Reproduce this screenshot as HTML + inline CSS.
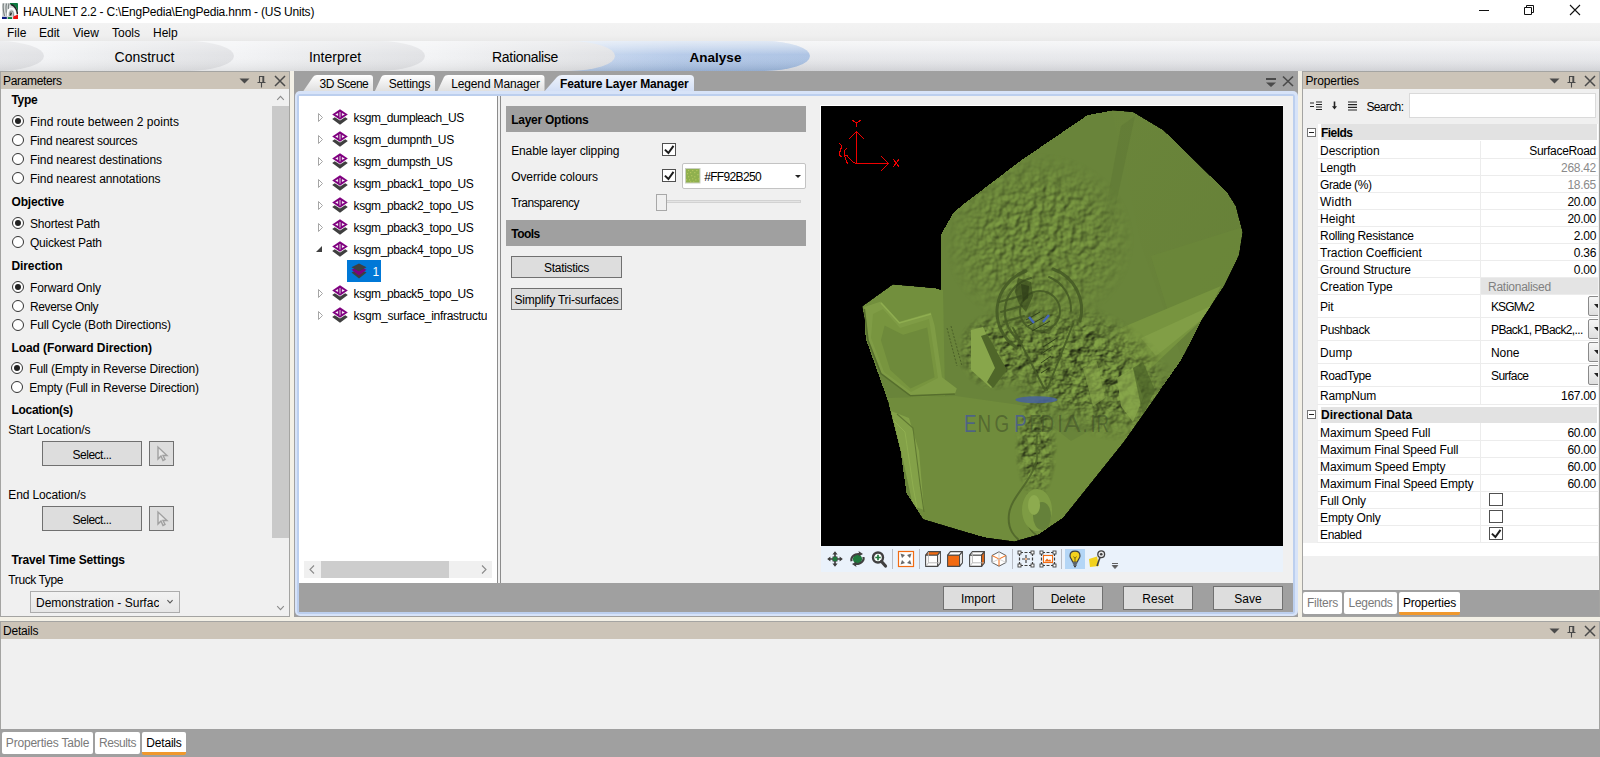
<!DOCTYPE html>
<html>
<head>
<meta charset="utf-8">
<title>HAULNET 2.2</title>
<style>
*{box-sizing:border-box;margin:0;padding:0}
html,body{width:1600px;height:757px;overflow:hidden;background:#f3f0e6}
body{font-family:"Liberation Sans",sans-serif;font-size:12px;color:#000;position:relative}
.abs{position:absolute}
.t{position:absolute;white-space:nowrap;line-height:14px;height:14px}
.b{font-weight:700}
/* title bar */
#title{left:0;top:0;width:1600px;height:23px;background:#fff}
/* menu */
#menu{left:0;top:23px;width:1600px;height:18px;background:linear-gradient(#f3f3f3,#efefef 70%,#e9e9e9)}
/* workflow */
#flow{left:0;top:41px;width:1600px;height:30px;background:linear-gradient(#f1f1f1,#e6e6e6 85%,#dedede);overflow:hidden}
/* panel headers */
.ph{position:absolute;height:17px;background:#ccc4b8}
.pbody{position:absolute;background:#f0f0f0}
.rad{position:absolute;width:12px;height:12px;border:1px solid #333;border-radius:50%;background:#fff}
.rad.on::after{content:"";position:absolute;left:2px;top:2px;width:6px;height:6px;border-radius:50%;background:#222}
.btn{position:absolute;background:#dddddd;border:1px solid #707070;text-align:center}
.chk{position:absolute;width:14px;height:13px;background:#fff;border:1px solid #505050}
.chk svg{position:absolute;left:-1px;top:-1px}
.tab{position:absolute;background:#fff;color:#7a7a7a;border-radius:2px;text-align:center;line-height:19px;height:20px}
.tab.sel{color:#000;border-bottom:3px solid #f0982c;line-height:18px}
</style>
</head>
<body>
<!-- TITLE BAR -->
<div id="title" class="abs"><svg class="abs" style="left:2px;top:3px" width="16" height="16" viewBox="0 0 16 16">
<rect width="16" height="16" rx="1" fill="#d9dcdc"/>
<path d="M8 0 H15 a1 1 0 0 1 1 1 V9 C15 4 12 2 8 1.5Z" fill="#0e7a40"/>
<path d="M9 1.5 C13 3 15 6 15.5 11" stroke="#222" stroke-width="1.4" fill="none"/>
<path d="M1.5 0.5 C0.5 5 1.5 9 2.5 13 M4.5 0.5 C3.5 5 4 9 5 13 M7 0.5 C6.3 3 6.3 5 6.5 6" stroke="#7c8484" stroke-width="1.2" fill="none"/>
<path d="M5.5 13 C5 8 7 5.5 9.5 5.5 C12 5.5 13.5 8 13.5 13" stroke="#fff" stroke-width="1.6" fill="none"/>
<path d="M7.5 13 C7.3 9.5 8.3 8 9.5 8 C10.8 8 11.5 9.5 11.5 13" stroke="#8d9494" stroke-width="1.2" fill="none"/>
<path d="M9.3 9.5 L8.6 12.5" stroke="#111" stroke-width="1.3"/>
<rect x="0" y="13.9" width="4.8" height="2.1" fill="#0a1a80"/><rect x="5.8" y="14.1" width="4.2" height="1.9" fill="#0e7a40"/><path d="M11.2 13.6 L16 11.6 V16 H11.2Z" fill="#f01010"/>
</svg><svg class="abs" style="left:1470px;top:0" width="120" height="22" viewBox="0 0 120 22" fill="none" stroke="#111" stroke-width="1">
<path d="M9 10.5 H19"/>
<path d="M54.5 7.5 H61.5 V14.5 H54.5Z M56.5 7.5 V5.5 H63.5 V12.5 H61.5"/>
<path d="M100 5 L110 15 M110 5 L100 15" stroke-width="1.1"/>
</svg>
  <div class="t" style="left:23px;top:5px;letter-spacing:-.21px">HAULNET 2.2 - C:\EngPedia\EngPedia.hnm - (US Units)</div>
</div>
<!-- MENU -->
<div id="menu" class="abs">
  <div class="t" style="left:7px;top:3px">File</div>
  <div class="t" style="left:39px;top:3px">Edit</div>
  <div class="t" style="left:73px;top:3px">View</div>
  <div class="t" style="left:112px;top:3px">Tools</div>
  <div class="t" style="left:153px;top:3px">Help</div>
</div>
<!-- WORKFLOW -->
<div id="flow" class="abs"><svg width="1600" height="30" viewBox="0 0 1600 30" style="display:block"><defs><linearGradient id="bg" x1="0" y1="0" x2="0" y2="1"><stop offset="0" stop-color="#f1f2f4"/><stop offset=".5" stop-color="#e9eaed"/><stop offset="1" stop-color="#e0e1e5"/></linearGradient><linearGradient id="s0" gradientUnits="userSpaceOnUse" x1="-150" y1="0" x2="44" y2="0"><stop offset="0" stop-color="#f3f4f6"/><stop offset=".35" stop-color="#ecedef"/><stop offset="1" stop-color="#e1e2e5"/></linearGradient><linearGradient id="s1" gradientUnits="userSpaceOnUse" x1="44" y1="0" x2="234" y2="0"><stop offset="0" stop-color="#f3f4f6"/><stop offset=".35" stop-color="#ecedef"/><stop offset="1" stop-color="#e1e2e5"/></linearGradient><linearGradient id="s2" gradientUnits="userSpaceOnUse" x1="234" y1="0" x2="425" y2="0"><stop offset="0" stop-color="#f3f4f6"/><stop offset=".35" stop-color="#ecedef"/><stop offset="1" stop-color="#e1e2e5"/></linearGradient><linearGradient id="s3" gradientUnits="userSpaceOnUse" x1="425" y1="0" x2="615" y2="0"><stop offset="0" stop-color="#f3f4f6"/><stop offset=".35" stop-color="#ecedef"/><stop offset="1" stop-color="#e1e2e5"/></linearGradient><linearGradient id="s4" gradientUnits="userSpaceOnUse" x1="575" y1="0" x2="810" y2="0"><stop offset="0" stop-color="#c9d9f0"/><stop offset=".45" stop-color="#b4c9e8"/><stop offset="1" stop-color="#abc2e3"/></linearGradient><linearGradient id="vb" x1="0" y1="0" x2="0" y2="1"><stop offset="0" stop-color="#fff" stop-opacity=".42"/><stop offset=".45" stop-color="#fff" stop-opacity=".04"/><stop offset="1" stop-color="#4878b8" stop-opacity=".16"/></linearGradient><linearGradient id="vs" x1="0" y1="0" x2="0" y2="1"><stop offset="0" stop-color="#fff" stop-opacity=".35"/><stop offset=".45" stop-color="#fff" stop-opacity="0"/><stop offset="1" stop-color="#000" stop-opacity=".07"/></linearGradient></defs><rect width="1600" height="30" fill="url(#bg)"/><path d="M569 0 H764 A46 15 0 0 1 764 30 H569Z" fill="url(#s4)"/><path d="M569 0 H764 A46 15 0 0 1 764 30 H569Z" fill="url(#vb)"/><path d="M379 0 H569 A46 15 0 0 1 569 30 H379Z" fill="url(#s3)"/><path d="M188 0 H379 A46 15 0 0 1 379 30 H188Z" fill="url(#s2)"/><path d="M-2 0 H188 A46 15 0 0 1 188 30 H-2Z" fill="url(#s1)"/><path d="M-196 0 H-2 A46 15 0 0 1 -2 30 H-196Z" fill="url(#s0)"/><rect width="1600" height="30" fill="url(#vs)"/></svg><div class="t" style="left:94.5px;top:8px;width:100px;text-align:center;font-size:14px;line-height:17px;height:17px">Construct</div><div class="t" style="left:285px;top:8px;width:100px;text-align:center;font-size:14px;line-height:17px;height:17px">Interpret</div><div class="t" style="left:475px;top:8px;width:100px;text-align:center;font-size:14px;line-height:17px;height:17px;letter-spacing:-0.297px">Rationalise</div><div class="t b" style="left:665.5px;top:8px;width:100px;text-align:center;font-size:13.5px;line-height:17px;height:17px">Analyse</div></div>

<!-- PARAMETERS PANEL -->
<div id="params" class="abs" style="left:0;top:71px;width:290px;height:546px;background:#f0f0f0;border:1px solid #a4a4a2"></div>
<div class="ph" style="left:1px;top:72px;width:288px"></div>
<div class="t" style="left:3px;top:74px;letter-spacing:-0.337px">Parameters</div>


<!-- params content -->
<div id="pcontent">
<div class="t b" style="left:11.5px;top:93px;letter-spacing:-0.342px">Type</div>
<div class="rad on" style="left:12px;top:115px"></div><div class="t" style="left:30px;top:115px;letter-spacing:0.034px">Find route between 2 points</div>
<div class="rad" style="left:12px;top:134.3px"></div><div class="t" style="left:30px;top:134px;letter-spacing:-0.240px">Find nearest sources</div>
<div class="rad" style="left:12px;top:153.2px"></div><div class="t" style="left:30px;top:153px;letter-spacing:-0.087px">Find nearest destinations</div>
<div class="rad" style="left:12px;top:172px"></div><div class="t" style="left:30px;top:172px;letter-spacing:-0.069px">Find nearest annotations</div>
<div class="t b" style="left:11.5px;top:195px;letter-spacing:-0.166px">Objective</div>
<div class="rad on" style="left:12px;top:217.3px"></div><div class="t" style="left:30px;top:217px;letter-spacing:-0.227px">Shortest Path</div>
<div class="rad" style="left:12px;top:236.1px"></div><div class="t" style="left:30px;top:236px;letter-spacing:-0.225px">Quickest Path</div>
<div class="t b" style="left:11.5px;top:259px;letter-spacing:-0.114px">Direction</div>
<div class="rad on" style="left:12px;top:281.3px"></div><div class="t" style="left:30px;top:281px;letter-spacing:-0.094px">Forward Only</div>
<div class="rad" style="left:12px;top:300.1px"></div><div class="t" style="left:30px;top:300px;letter-spacing:-0.382px">Reverse Only</div>
<div class="rad" style="left:12px;top:318.9px"></div><div class="t" style="left:30px;top:318px;letter-spacing:-0.162px">Full Cycle (Both Directions)</div>
<div class="t b" style="left:11.5px;top:341px;letter-spacing:-0.094px">Load (Forward Direction)</div>
<div class="rad on" style="left:11px;top:362.3px"></div><div class="t" style="left:29.3px;top:362px;letter-spacing:-0.198px">Full (Empty in Reverse Direction)</div>
<div class="rad" style="left:11px;top:381.1px"></div><div class="t" style="left:29.3px;top:381px;letter-spacing:-0.198px">Empty (Full in Reverse Direction)</div>
<div class="t b" style="left:11.5px;top:403px;letter-spacing:-0.317px">Location(s)</div>
<div class="t" style="left:8.3px;top:423px;letter-spacing:-0.079px">Start Location/s</div>
<div class="btn" style="left:42px;top:441px;width:100px;height:25px;line-height:26.6px;letter-spacing:-0.507px">Select...</div>
<div class="btn" style="left:149px;top:441px;width:25px;height:25px"><svg width="23" height="23" viewBox="0 0 23 23"><path d="M8 5 L8 17 L11 14 L13 18.5 L15 17.5 L13 13.5 L17 13.5 Z" fill="#e6e6e6" stroke="#a0a0a0" stroke-width="1.4"/></svg></div>
<div class="t" style="left:8.3px;top:487.5px;letter-spacing:-0.130px">End Location/s</div>
<div class="btn" style="left:42px;top:506px;width:100px;height:25px;line-height:26.6px;letter-spacing:-0.507px">Select...</div>
<div class="btn" style="left:149px;top:506px;width:25px;height:25px"><svg width="23" height="23" viewBox="0 0 23 23"><path d="M8 5 L8 17 L11 14 L13 18.5 L15 17.5 L13 13.5 L17 13.5 Z" fill="#e6e6e6" stroke="#a0a0a0" stroke-width="1.4"/></svg></div>
<div class="t b" style="left:11.5px;top:553px;letter-spacing:-0.158px">Travel Time Settings</div>
<div class="t" style="left:8.3px;top:573px;letter-spacing:-0.399px">Truck Type</div>
<div class="abs" style="left:30px;top:591px;width:150px;height:22px;background:linear-gradient(#f2f2f2,#e6e6e6);border:1px solid #acacac"></div>
<div class="t" style="left:36px;top:596px;width:123px;overflow:hidden">Demonstration - Surface</div>
<svg class="abs" style="left:165.3px;top:597.6px" width="10" height="8" viewBox="0 0 10 8"><path d="M2.4 2.2 L5 4.9 L7.6 2.2" fill="none" stroke="#555" stroke-width="1.1"/></svg>
<!-- scrollbar -->
<div class="abs" style="left:272px;top:89px;width:17px;height:527px;background:#f0f0f0"></div>
<div class="abs" style="left:272px;top:106px;width:17px;height:432px;background:#c9c9c9"></div>
<svg class="abs" style="left:275px;top:94px" width="11" height="8" viewBox="0 0 11 8"><path d="M2.2 5.8 L5.5 2.4 L8.8 5.8" fill="none" stroke="#8a8a8a" stroke-width="1.1"/></svg>
<svg class="abs" style="left:275px;top:604px" width="11" height="8" viewBox="0 0 11 8"><path d="M2.2 2.2 L5.5 5.6 L8.8 2.2" fill="none" stroke="#8a8a8a" stroke-width="1.1"/></svg>
</div>

<svg class="abs" style="left:238px;top:72.5px" width="52" height="16" viewBox="0 0 52 16"><path d="M1.5 5.5 h10 l-5 5z" fill="#4a4a4a"/><path d="M21 3.5 h5 M21.5 3.5 v6 M19.5 9.5 h8 M23.5 9.5 v5" stroke="#4a4a4a" stroke-width="1.1" fill="none"/><path d="M25.3 3 v6.5" stroke="#4a4a4a" stroke-width="1.9" fill="none"/><path d="M37 3 L47 13 M47 3 L37 13" stroke="#4a4a4a" stroke-width="1.5" fill="none"/></svg>
<!-- CENTER PANEL -->
<div id="center" class="abs" style="left:294px;top:71px;width:1004px;height:546px;background:#a0a0a0"></div>


<!-- center tabs -->
<svg class="abs" style="left:294px;top:71px" width="1004" height="22" viewBox="0 0 1004 22">
 <defs>
  <linearGradient id="tg" x1="0" y1="0" x2="0" y2="1"><stop offset="0" stop-color="#ffffff"/><stop offset="1" stop-color="#dcdcdc"/></linearGradient>
  <linearGradient id="tgs" x1="0" y1="0" x2="0" y2="1"><stop offset="0" stop-color="#eef3fc"/><stop offset="1" stop-color="#cfdcf4"/></linearGradient>
 </defs>
 <path d="M8 22 L19 6 Q20.3 4 23 4 L76 4 Q79 4 79 7 L79 22Z" fill="url(#tg)"/>
 <path d="M80 22 L87.3 6 Q88.2 4 91 4 L138 4 Q141 4 141 7 L141 22Z" fill="url(#tg)"/>
 <path d="M142.5 22 L150 6 Q151 4 154 4 L247.5 4 Q250.5 4 250.5 7 L250.5 22Z" fill="url(#tg)"/>
 <path d="M249 22 L263 6 Q264.8 4 268 4 L396 4 Q400 4 400 8 L400 22Z" fill="url(#tgs)"/>
</svg>
<div class="t" style="left:319.6px;top:77px;letter-spacing:-0.500px">3D Scene</div>
<div class="t" style="left:388.8px;top:77px;letter-spacing:-0.239px">Settings</div>
<div class="t" style="left:451.3px;top:77px;letter-spacing:-0.157px">Legend Manager</div>
<div class="t b" style="left:560px;top:77px;letter-spacing:-0.135px">Feature Layer Manager</div>
<!-- center header icons -->
<svg class="abs" style="left:1264px;top:75px" width="32" height="14" viewBox="0 0 32 14"><path d="M2 3 h10 v2 h-10z M2 7.5 h10 l-5 4.5z" fill="#4a4a4a"/><path d="M19 1.5 L29 11 M29 1.5 L19 11" stroke="#4a4a4a" stroke-width="1.6" fill="none"/></svg>
<!-- blue frame -->
<div class="abs" style="left:295px;top:91px;width:1003px;height:525px;border-radius:5px;background:#d7e3f8"></div>
<div class="abs" style="left:297px;top:93.6px;width:998.4px;height:520px;border-radius:3px;background:#bccfee"></div>
<div class="abs" style="left:299px;top:96px;width:994px;height:516px;background:#a0a0a0"></div>
<!-- tree -->
<div class="abs" style="left:299px;top:96px;width:198px;height:487px;background:#fff"></div>
<div id="tree" class="abs" style="left:0;top:0;width:487px;height:583px;overflow:hidden">
<svg class="abs" style="left:317px;top:112.0px" width="7" height="11" viewBox="0 0 7 11"><path d="M1.5 1.5 L5.5 5.5 L1.5 9.5Z" fill="#fff" stroke="#a6a6a6" stroke-width="1"/></svg><svg class="abs" style="left:332px;top:109.0px" width="16" height="16" viewBox="0 0 16 16"><path d="M0.2 10 L2.8 8.3 L8 11.6 L13.2 8.3 L15.8 10 L8 15.8Z" fill="#3f3f3f"/><path d="M8 0.2 L15.8 5.5 L8 10.8 L0.2 5.5Z" fill="#800080"/><path d="M7.4 3 h1.2 v5.6 h-1.2z" fill="#c9b3c9"/><path d="M3.2 5.5 L6.1 3.9 V7.1Z M12.8 5.5 L9.9 3.9 V7.1Z" fill="#f3eaf3"/></svg><div class="t" style="left:353.6px;top:111.0px;letter-spacing:-0.425px">ksgm_dumpleach_US</div><svg class="abs" style="left:317px;top:134.0px" width="7" height="11" viewBox="0 0 7 11"><path d="M1.5 1.5 L5.5 5.5 L1.5 9.5Z" fill="#fff" stroke="#a6a6a6" stroke-width="1"/></svg><svg class="abs" style="left:332px;top:131.0px" width="16" height="16" viewBox="0 0 16 16"><path d="M0.2 10 L2.8 8.3 L8 11.6 L13.2 8.3 L15.8 10 L8 15.8Z" fill="#3f3f3f"/><path d="M8 0.2 L15.8 5.5 L8 10.8 L0.2 5.5Z" fill="#800080"/><path d="M7.4 3 h1.2 v5.6 h-1.2z" fill="#c9b3c9"/><path d="M3.2 5.5 L6.1 3.9 V7.1Z M12.8 5.5 L9.9 3.9 V7.1Z" fill="#f3eaf3"/></svg><div class="t" style="left:353.6px;top:133.0px;letter-spacing:-0.342px">ksgm_dumpnth_US</div><svg class="abs" style="left:317px;top:156.0px" width="7" height="11" viewBox="0 0 7 11"><path d="M1.5 1.5 L5.5 5.5 L1.5 9.5Z" fill="#fff" stroke="#a6a6a6" stroke-width="1"/></svg><svg class="abs" style="left:332px;top:153.0px" width="16" height="16" viewBox="0 0 16 16"><path d="M0.2 10 L2.8 8.3 L8 11.6 L13.2 8.3 L15.8 10 L8 15.8Z" fill="#3f3f3f"/><path d="M8 0.2 L15.8 5.5 L8 10.8 L0.2 5.5Z" fill="#800080"/><path d="M7.4 3 h1.2 v5.6 h-1.2z" fill="#c9b3c9"/><path d="M3.2 5.5 L6.1 3.9 V7.1Z M12.8 5.5 L9.9 3.9 V7.1Z" fill="#f3eaf3"/></svg><div class="t" style="left:353.6px;top:155.0px;letter-spacing:-0.401px">ksgm_dumpsth_US</div><svg class="abs" style="left:317px;top:178.0px" width="7" height="11" viewBox="0 0 7 11"><path d="M1.5 1.5 L5.5 5.5 L1.5 9.5Z" fill="#fff" stroke="#a6a6a6" stroke-width="1"/></svg><svg class="abs" style="left:332px;top:175.0px" width="16" height="16" viewBox="0 0 16 16"><path d="M0.2 10 L2.8 8.3 L8 11.6 L13.2 8.3 L15.8 10 L8 15.8Z" fill="#3f3f3f"/><path d="M8 0.2 L15.8 5.5 L8 10.8 L0.2 5.5Z" fill="#800080"/><path d="M7.4 3 h1.2 v5.6 h-1.2z" fill="#c9b3c9"/><path d="M3.2 5.5 L6.1 3.9 V7.1Z M12.8 5.5 L9.9 3.9 V7.1Z" fill="#f3eaf3"/></svg><div class="t" style="left:353.6px;top:177.0px;letter-spacing:-0.401px">ksgm_pback1_topo_US</div><svg class="abs" style="left:317px;top:200.0px" width="7" height="11" viewBox="0 0 7 11"><path d="M1.5 1.5 L5.5 5.5 L1.5 9.5Z" fill="#fff" stroke="#a6a6a6" stroke-width="1"/></svg><svg class="abs" style="left:332px;top:197.0px" width="16" height="16" viewBox="0 0 16 16"><path d="M0.2 10 L2.8 8.3 L8 11.6 L13.2 8.3 L15.8 10 L8 15.8Z" fill="#3f3f3f"/><path d="M8 0.2 L15.8 5.5 L8 10.8 L0.2 5.5Z" fill="#800080"/><path d="M7.4 3 h1.2 v5.6 h-1.2z" fill="#c9b3c9"/><path d="M3.2 5.5 L6.1 3.9 V7.1Z M12.8 5.5 L9.9 3.9 V7.1Z" fill="#f3eaf3"/></svg><div class="t" style="left:353.6px;top:199.0px;letter-spacing:-0.401px">ksgm_pback2_topo_US</div><svg class="abs" style="left:317px;top:222.0px" width="7" height="11" viewBox="0 0 7 11"><path d="M1.5 1.5 L5.5 5.5 L1.5 9.5Z" fill="#fff" stroke="#a6a6a6" stroke-width="1"/></svg><svg class="abs" style="left:332px;top:219.0px" width="16" height="16" viewBox="0 0 16 16"><path d="M0.2 10 L2.8 8.3 L8 11.6 L13.2 8.3 L15.8 10 L8 15.8Z" fill="#3f3f3f"/><path d="M8 0.2 L15.8 5.5 L8 10.8 L0.2 5.5Z" fill="#800080"/><path d="M7.4 3 h1.2 v5.6 h-1.2z" fill="#c9b3c9"/><path d="M3.2 5.5 L6.1 3.9 V7.1Z M12.8 5.5 L9.9 3.9 V7.1Z" fill="#f3eaf3"/></svg><div class="t" style="left:353.6px;top:221.0px;letter-spacing:-0.401px">ksgm_pback3_topo_US</div><svg class="abs" style="left:315px;top:245.0px" width="8" height="8" viewBox="0 0 8 8"><path d="M7 1 V7 H1Z" fill="#404040"/></svg><svg class="abs" style="left:332px;top:241.0px" width="16" height="16" viewBox="0 0 16 16"><path d="M0.2 10 L2.8 8.3 L8 11.6 L13.2 8.3 L15.8 10 L8 15.8Z" fill="#3f3f3f"/><path d="M8 0.2 L15.8 5.5 L8 10.8 L0.2 5.5Z" fill="#800080"/><path d="M7.4 3 h1.2 v5.6 h-1.2z" fill="#c9b3c9"/><path d="M3.2 5.5 L6.1 3.9 V7.1Z M12.8 5.5 L9.9 3.9 V7.1Z" fill="#f3eaf3"/></svg><div class="t" style="left:353.6px;top:243.0px;letter-spacing:-0.401px">ksgm_pback4_topo_US</div><svg class="abs" style="left:317px;top:288.0px" width="7" height="11" viewBox="0 0 7 11"><path d="M1.5 1.5 L5.5 5.5 L1.5 9.5Z" fill="#fff" stroke="#a6a6a6" stroke-width="1"/></svg><svg class="abs" style="left:332px;top:285.0px" width="16" height="16" viewBox="0 0 16 16"><path d="M0.2 10 L2.8 8.3 L8 11.6 L13.2 8.3 L15.8 10 L8 15.8Z" fill="#3f3f3f"/><path d="M8 0.2 L15.8 5.5 L8 10.8 L0.2 5.5Z" fill="#800080"/><path d="M7.4 3 h1.2 v5.6 h-1.2z" fill="#c9b3c9"/><path d="M3.2 5.5 L6.1 3.9 V7.1Z M12.8 5.5 L9.9 3.9 V7.1Z" fill="#f3eaf3"/></svg><div class="t" style="left:353.6px;top:287.0px;letter-spacing:-0.401px">ksgm_pback5_topo_US</div><svg class="abs" style="left:317px;top:310.0px" width="7" height="11" viewBox="0 0 7 11"><path d="M1.5 1.5 L5.5 5.5 L1.5 9.5Z" fill="#fff" stroke="#a6a6a6" stroke-width="1"/></svg><svg class="abs" style="left:332px;top:307.0px" width="16" height="16" viewBox="0 0 16 16"><path d="M0.2 10 L2.8 8.3 L8 11.6 L13.2 8.3 L15.8 10 L8 15.8Z" fill="#3f3f3f"/><path d="M8 0.2 L15.8 5.5 L8 10.8 L0.2 5.5Z" fill="#800080"/><path d="M7.4 3 h1.2 v5.6 h-1.2z" fill="#c9b3c9"/><path d="M3.2 5.5 L6.1 3.9 V7.1Z M12.8 5.5 L9.9 3.9 V7.1Z" fill="#f3eaf3"/></svg><div class="t" style="left:353.6px;top:309.0px;letter-spacing:-.29px">ksgm_surface_infrastructure</div>
<div class="abs" style="left:347px;top:260px;width:34px;height:22px;background:#0078d7"></div>
<svg class="abs" style="left:351px;top:263px" width="16" height="16" viewBox="0 0 16 16"><path d="M0.5 9.5 L8 6 L15.5 9.5 L8 15.5Z" fill="#3f3f3f"/><path d="M0.5 6.8 L8 3.5 L15.5 6.8 L8 12.5Z" fill="#800080"/><path d="M0.5 4.3 L8 0.5 L15.5 4.3 L8 8.5Z" fill="#3f3f3f"/></svg>
<div class="t" style="left:372.5px;top:265px;color:#fff">1</div>
</div>
<!-- tree h-scrollbar -->
<div class="abs" style="left:304px;top:561px;width:188px;height:17px;background:#f0f0f0"></div>
<div class="abs" style="left:321px;top:561px;width:128px;height:17px;background:#cdcdcd"></div>
<svg class="abs" style="left:308px;top:564px" width="8" height="11" viewBox="0 0 8 11"><path d="M6 1.5 L2 5.5 L6 9.5" fill="none" stroke="#8a8a8a" stroke-width="1.1"/></svg>
<svg class="abs" style="left:480px;top:564px" width="8" height="11" viewBox="0 0 8 11"><path d="M2 1.5 L6 5.5 L2 9.5" fill="none" stroke="#8a8a8a" stroke-width="1.1"/></svg>
<!-- splitter -->
<div class="abs" style="left:497px;top:96px;width:4px;height:487px;background:#f0f0f0;border-left:1px solid #8c8c8c;border-right:1px solid #8c8c8c"></div>
<!-- right content -->
<div class="abs" style="left:501px;top:96px;width:792px;height:487px;background:#f0f0f0"></div>
<div class="abs" style="left:506px;top:106px;width:300px;height:26px;background:#a0a0a0"></div>
<div class="t b" style="left:511.2px;top:112.5px;letter-spacing:-0.257px">Layer Options</div>
<div class="t" style="left:511.2px;top:144px;letter-spacing:-0.122px">Enable layer clipping</div>
<div class="chk" style="left:662px;top:143px"><svg width="14" height="13" viewBox="0 0 14 13"><path d="M2.9 6.6 L6.4 10 L11.5 2.9" fill="none" stroke="#1c1c1c" stroke-width="2"/></svg></div>
<div class="t" style="left:511.2px;top:170px;letter-spacing:-0.082px">Override colours</div>
<div class="chk" style="left:662px;top:169px"><svg width="14" height="13" viewBox="0 0 14 13"><path d="M2.9 6.6 L6.4 10 L11.5 2.9" fill="none" stroke="#1c1c1c" stroke-width="2"/></svg></div>
<div class="abs" style="left:682px;top:163px;width:124px;height:26px;background:#fff;border:1px solid #c3c3c3;border-radius:2px"></div>
<svg class="abs" style="left:685px;top:168px" width="15.5" height="15.5" viewBox="0 0 15 15"><rect width="15" height="15" fill="#c9cfc0"/><rect x="1" y="1" width="13" height="13" fill="#8fb04e"/><rect x="3" y="2" width="1" height="1" fill="#c3cf66"/><rect x="7" y="2" width="1" height="1" fill="#c3cf66"/><rect x="11" y="2" width="1" height="1" fill="#c3cf66"/><rect x="2" y="5" width="1" height="1" fill="#c3cf66"/><rect x="5" y="4" width="1" height="1" fill="#c3cf66"/><rect x="9" y="4" width="1" height="1" fill="#c3cf66"/><rect x="12" y="6" width="1" height="1" fill="#c3cf66"/><rect x="3" y="8" width="1" height="1" fill="#c3cf66"/><rect x="6" y="7" width="1" height="1" fill="#c3cf66"/><rect x="9" y="8" width="1" height="1" fill="#c3cf66"/><rect x="4" y="11" width="1" height="1" fill="#c3cf66"/><rect x="7" y="10" width="1" height="1" fill="#c3cf66"/><rect x="10" y="11" width="1" height="1" fill="#c3cf66"/><rect x="13" y="10" width="1" height="1" fill="#c3cf66"/><rect x="1" y="11" width="1" height="1" fill="#c3cf66"/><rect x="5" y="13" width="1" height="1" fill="#c3cf66"/><rect x="8" y="13" width="1" height="1" fill="#c3cf66"/></svg>
<div class="t" style="left:704.2px;top:170px;letter-spacing:-0.664px">#FF92B250</div>
<svg class="abs" style="left:794.5px;top:174.5px" width="6" height="3" viewBox="0 0 6 3"><path d="M0 0 h6 l-3 3z" fill="#222"/></svg>
<div class="t" style="left:511.2px;top:195.5px;letter-spacing:-0.411px">Transparency</div>
<div class="abs" style="left:661px;top:200px;width:140px;height:3px;background:#e4e4e4;border:1px solid #d2d2d2"></div>
<div class="abs" style="left:656px;top:194px;width:11px;height:17px;background:#f0f0f0;border:1px solid #a8a8a8"></div>
<div class="abs" style="left:506px;top:220px;width:300px;height:26px;background:#a0a0a0"></div>
<div class="t b" style="left:511.2px;top:226.5px;letter-spacing:-.5px">Tools</div>
<div class="btn" style="left:511px;top:256px;width:111px;height:22px;line-height:22.6px;letter-spacing:-0.324px">Statistics</div>
<div class="btn" style="left:511px;top:288px;width:111px;height:22px;line-height:22.6px;letter-spacing:-0.186px">Simplify Tri-surfaces</div>
<!-- viewport -->
<div class="abs" style="left:820px;top:105px;width:463px;height:442px;background:#fff"></div>
<div id="vp" class="abs" style="left:821px;top:106px;width:462px;height:440px;background:#000;overflow:hidden"><svg width="462" height="440" viewBox="0 0 462 440" style="display:block">
<defs>
 <clipPath id="tc" shape-rendering="crispEdges"><polygon shape-rendering="crispEdges" points="266.4,9.2 290.7,4.6 311.9,6.2 342.3,24.4 406.1,86.7 414.6,100.3 421.3,126.2 417.7,149.0 403.1,179.3 380.3,214.0 360.5,253.5 302.8,335.5 242.0,411.5 217.7,428.2 193.4,435.2 163.0,431.2 102.3,413.0 85.6,387.2 79.5,344.6 67.4,296.0 44.6,232.2 44.0,214.0 41.5,200.6 71.9,178.7 114.5,182.4 119.9,183.9 120.5,127.7 132.7,106.4 141.8,98.8 199.5,54.8"/></clipPath>
 <filter id="rough" x="0" y="0" width="100%" height="100%" color-interpolation-filters="sRGB">
  <feTurbulence type="fractalNoise" baseFrequency="0.13" numOctaves="2" seed="11" result="n"/>
  <feDiffuseLighting in="n" surfaceScale="1.9" diffuseConstant="1.1" lighting-color="#7e9d44"><feDistantLight azimuth="225" elevation="50"/></feDiffuseLighting>
 </filter>
 <filter id="rough2" x="0" y="0" width="100%" height="100%" color-interpolation-filters="sRGB">
  <feTurbulence type="fractalNoise" baseFrequency="0.09 0.13" numOctaves="3" seed="3" result="n"/>
  <feDiffuseLighting in="n" surfaceScale="3.3" diffuseConstant="1.1" lighting-color="#7e9d44"><feDistantLight azimuth="215" elevation="48"/></feDiffuseLighting>
 </filter>
 <radialGradient id="rm" cx="0.5" cy="0.5" r="0.5"><stop offset="0" stop-color="#fff"/><stop offset="0.55" stop-color="#fff" stop-opacity=".8"/><stop offset="1" stop-color="#fff" stop-opacity="0"/></radialGradient>
 <mask id="mA"><ellipse cx="218" cy="135" rx="95" ry="88" fill="url(#rm)"/></mask>
 <mask id="mB"><ellipse cx="262" cy="262" rx="105" ry="62" fill="url(#rm)" transform="rotate(28 262 262)"/><ellipse cx="175" cy="245" rx="40" ry="40" fill="url(#rm)"/><ellipse cx="215" cy="340" rx="22" ry="55" fill="url(#rm)"/></mask>
 <linearGradient id="rg" x1="0" y1="0" x2="1" y2="1"><stop offset="0" stop-color="#6a853a"/><stop offset="1" stop-color="#668038"/></linearGradient>
</defs>
<polygon points="266.4,9.2 290.7,4.6 311.9,6.2 342.3,24.4 406.1,86.7 414.6,100.3 421.3,126.2 417.7,149.0 403.1,179.3 380.3,214.0 360.5,253.5 302.8,335.5 242.0,411.5 217.7,428.2 193.4,435.2 163.0,431.2 102.3,413.0 85.6,387.2 79.5,344.6 67.4,296.0 44.6,232.2 44.0,214.0 41.5,200.6 71.9,178.7 114.5,182.4 119.9,183.9 120.5,127.7 132.7,106.4 141.8,98.8 199.5,54.8" fill="#69843a" shape-rendering="crispEdges"/>
<g clip-path="url(#tc)">
 <!-- smooth right region -->
 <polygon points="290,0 462,0 462,210 360,250 320,140" fill="url(#rg)"/>
 <polygon points="300,20 314,10 288,130 280,128" fill="#5f7934" opacity=".55"/>
 <polygon points="330,150 425,120 420,170 350,215" fill="#6d893b" opacity=".6"/>
 <polygon points="300,222 400,180 385,210 330,262 290,250" fill="#77943f"/>
 <polygon points="320,232 390,200 380,214 335,250" fill="#819e46"/>
 <!-- left flap (pit) -->
 <polygon points="38,198 75,176 122,184 124,290 90,292 50,240" fill="#728f3d"/>
 <polygon points="43.3,201 59.9,195.5 78.4,215.8 109.9,206.6 113.6,219.5 121,271.3 135.8,282.4 133.9,288 89.5,289.8 59.9,267.6 47,234.3" fill="#7f9c45"/>
 <polygon points="52,208 62,203 79,222 108,213 117,272 90,286 63,266 50,232" fill="#78953f"/>
 <polygon points="63.6,219.5 82.1,228.8 106.2,221.4 113.6,271.3 89.5,282.4 69.2,263.9 59.9,234.3" fill="#6e8a3b"/>
 <polyline points="43.3,203 47,234.3 59.9,267.6 89.5,289.8 133.9,288" fill="none" stroke="#566e2d" stroke-width="1.6"/>
 <polyline points="60,197 78.4,217 109.9,208" fill="none" stroke="#8fae50" stroke-width="1.5"/>
 <!-- lower smooth -->
 <polygon points="66,292 135,290 205,300 250,335 330,290 345,280 300,345 242,412 200,440 100,415 80,345" fill="#708c3c"/>
 <polygon points="70,305 88,312 98,345 103,404 92,400 80,345" fill="#83a148"/>
 <polyline points="76,308 92,322 99,378 103,406" fill="none" stroke="#5f7832" stroke-width="1.1"/>
 <polyline points="70,312 84,326 92,380 96,402" fill="none" stroke="#8fae50" stroke-width="1"/>
 <!-- rough textures -->
 <g mask="url(#mA)"><rect x="110" y="30" width="230" height="200" filter="url(#rough)" opacity=".9"/></g>
 <g mask="url(#mB)"><rect x="120" y="170" width="260" height="240" filter="url(#rough2)"/></g>
 <!-- circular feature -->
 <g fill="none" stroke="#465a25" stroke-opacity=".88" stroke-linecap="round">
  <path d="M205 165 A43 43 0 0 0 196 242" stroke-width="3"/>
  <path d="M210 172 A35 35 0 0 0 201 236" stroke-width="2.2"/>
  <path d="M232 163 A43 43 0 0 1 259 215" stroke-width="3"/>
  <path d="M228 171 A35 35 0 0 1 250 205" stroke-width="2"/>
  <circle cx="219" cy="205" r="20" stroke-width="2"/>
  <path d="M192 222 L224 284 M252 218 L226 284" stroke-width="2"/>
  <path d="M178 196 L200 190 M180 206 L201 200 M183 216 L203 210" stroke-width="2"/>
 </g>
 <polygon points="197,172 210,176 212,190 205,206 198,198 194,186" fill="#34441b" opacity=".6"/><polygon points="200,178 208,180 207,192 202,196" fill="#2a3716" opacity=".6"/>
 <path d="M205 214 l14 -8 M207 220 l16 -9 M211 225 l18 -10 M232 240 l-12 8 M230 250 l-10 7 M236 232 l-14 9 M228 262 l-8 5" stroke="#2e3c18" stroke-width=".9"/>
 <path d="M208 211 l5 6 M222 216 l6 -7" stroke="#4466b8" stroke-width="2.4"/>
 <!-- blocky ridge left of funnel -->
 <polygon points="150,224 162,221 184,266 170,282 150,264" fill="#88a64b"/>
 <polygon points="160,230 166,228 186,264 172,282 166,276 174,262" fill="#4f6629"/>
 <path d="M126 222 l10 38 M130 220 l11 40" stroke="#4b6028" stroke-width="1" stroke-dasharray="2 1.5"/>
 <!-- ridges lower right -->
 <polygon points="296,272 312,262 322,292 312,316 300,300" fill="#8aa84c" opacity=".75"/>
 <polygon points="312,262 322,256 334,284 322,310" fill="#4f6629" opacity=".7"/>
 <polygon points="262,262 276,256 284,292 272,300" fill="#88a64b" opacity=".6"/>
 <!-- lower ridge line and hill -->
 <path d="M216 330 C214 345 219 350 213 362 C206 380 190 392 188 408 C186 424 194 431 200 436" fill="none" stroke="#4c6128" stroke-width="2" stroke-opacity=".8"/>
 <path d="M206 404 C204 420 212 432 224 430" fill="none" stroke="#556d2d" stroke-width="1.5"/>
 <ellipse cx="216" cy="404" rx="15" ry="21" fill="#7e9c44"/>
 <ellipse cx="221" cy="410" rx="9" ry="14" fill="#65813a"/>
 <ellipse cx="213" cy="399" rx="6" ry="10" fill="#8dab4f"/>
 <!-- blue ellipse -->
 <ellipse cx="215.4" cy="293.8" rx="21" ry="3.5" fill="#4560a4" opacity=".8"/>
 <!-- watermark -->
 <g font-family="Liberation Sans, sans-serif" font-size="23.5"><text transform="translate(143,325.5) scale(0.8,1)" fill="#4a5e8e" fill-opacity=".88">E</text><text transform="translate(156.5,325.5) scale(0.8,1)" fill="#43542a" fill-opacity=".62">N</text><text transform="translate(173.5,325.5) scale(0.8,1)" fill="#43542a" fill-opacity=".62">G</text><text transform="translate(193.2,325.5) scale(0.8,1)" fill="#4a5e8e" fill-opacity=".88">P</text><text transform="translate(208,325.5) scale(0.8,1)" fill="#43542a" fill-opacity=".62">E</text><text transform="translate(219.5,325.5) scale(0.8,1)" fill="#43542a" fill-opacity=".62">D</text><text transform="translate(236.5,325.5) scale(0.8,1)" fill="#43542a" fill-opacity=".62">I</text><text transform="translate(242.5,325.5) scale(1.08,1)" fill="#43542a" fill-opacity=".62">A</text><text transform="translate(261.5,325.5) scale(0.8,1)" fill="#43542a" fill-opacity=".62">.</text><text transform="translate(269.5,325.5) scale(0.8,1)" fill="#43542a" fill-opacity=".62">I</text><text transform="translate(275.5,325.5) scale(0.72,1)" fill="#43542a" fill-opacity=".62">R</text></g>
</g>
<!-- axis gizmo -->
<g fill="none" stroke="#f00000" stroke-width="1" shape-rendering="crispEdges">
 <path d="M35.5 57.5 V25.3 M28.1 32.9 L35.5 25.3 L43 32.9"/>
 <path d="M35.5 57.5 H67.7 M60.2 50 L67.7 57.5 L60.2 64.9"/>
 <path d="M35.5 57.5 L32 56 L26.1 49.8 L24.5 49.5"/>
 <path d="M18.2 37 L20.8 39.5 L20 42.5 L18.5 47 L18.5 49.5 L20.8 50.7"/>
 <path d="M25.6 42.3 L23.3 45 L23.5 49.5 L24.2 52 L25.3 55 L26.6 57.7"/>
 <path d="M31.2 14.2 L35.5 17 L39.7 14.2 M35.5 17 V21"/>
 <path d="M72.4 53.5 L77.9 60.6 M77.9 53.5 L72.4 60.6"/>
</g>
</svg></div>
<!-- toolbar -->
<div id="tb" class="abs" style="left:821px;top:546px;width:462px;height:26px;background:#eaf2fb"><svg width="462" height="26" viewBox="0 0 462 26" style="display:block"><g transform="translate(6,5)"><path d="M8 0.2 L10.6 3.4 H5.4Z M8 15.8 L10.6 12.6 H5.4Z M0.2 8 L3.4 5.4 V10.6Z M15.8 8 L12.6 5.4 V10.6Z" fill="#3c3c3c"/><path d="M8 3 V13 M3 8 H13" stroke="#3c3c3c" stroke-width="1.6"/><rect x="5.8" y="5.8" width="4.4" height="4.4" fill="#1e7a3c" stroke="#3c3c3c" stroke-width=".5"/></g><g transform="translate(28,5)"><circle cx="8.5" cy="8" r="4.6" fill="#1e7a3c"/><path d="M1.5 10.5 C0 5 6 1.5 10 2 L9.5 0 L14 3 L9.5 5.5 L9.8 4 C6 3.8 2.8 6.5 3.6 10Z M15.5 6 C17 11 11 14.5 7 14 L7.5 16 L3 13 L7.5 10.5 L7.2 12 C11 12.2 14.2 9.5 13.4 6Z" fill="#404040"/></g><g transform="translate(50,5)"><circle cx="7" cy="6.5" r="5" fill="#fff" stroke="#404040" stroke-width="2.4"/><path d="M10.5 10.5 L14.5 15" stroke="#404040" stroke-width="3.2" stroke-linecap="round"/><path d="M4.3 6.5 H9.7 M7 3.8 V9.2" stroke="#1e7a3c" stroke-width="1.7"/></g><rect x="71" y="3" width="1" height="20" fill="#b8bcc4"/><g transform="translate(77,5)"><rect x="0.5" y="0.5" width="15" height="15" fill="#fff" stroke="#f26b12" stroke-width="1.2"/><path d="M2.5 2.5 L7 4 L4 7Z M13.5 2.5 L9 4 L12 7Z M2.5 13.5 L7 12 L4 9Z M13.5 13.5 L9 12 L12 9Z" fill="#6a6a6a"/></g><rect x="98" y="3" width="1" height="20" fill="#b8bcc4"/><g transform="translate(104,5)" stroke="#4a4a4a" stroke-width="1.1" stroke-linejoin="round" fill="#fff"><path d="M0.6 4.2 L3.4 0.6 H15.4 L12.6 4.2Z" fill="#f26b12"/><path d="M0.6 4.2 H12.6 V15.4 H0.6Z" fill="#fff"/><path d="M12.6 4.2 L15.4 0.6 V11.8 L12.6 15.4Z" fill="#fff"/><path d="M3.4 1 V11.8 H15 M3.4 11.8 L0.8 15.2" stroke="#b4b4b4" stroke-width=".9" fill="none"/></g><g transform="translate(126,5)" stroke="#4a4a4a" stroke-width="1.1" stroke-linejoin="round" fill="#fff"><path d="M0.6 4.2 L3.4 0.6 H15.4 L12.6 4.2Z" fill="#fff"/><path d="M0.6 4.2 H12.6 V15.4 H0.6Z" fill="#f26b12"/><path d="M12.6 4.2 L15.4 0.6 V11.8 L12.6 15.4Z" fill="#fff"/></g><g transform="translate(148,5)" stroke="#4a4a4a" stroke-width="1.1" stroke-linejoin="round" fill="#fff"><path d="M0.6 4.2 L3.4 0.6 H15.4 L12.6 4.2Z" fill="#fff"/><path d="M0.6 4.2 H12.6 V15.4 H0.6Z" fill="#fff"/><path d="M12.6 4.2 L15.4 0.6 V11.8 L12.6 15.4Z" fill="#f26b12"/><path d="M3.4 1 V11.8 H15 M3.4 11.8 L0.8 15.2" stroke="#b4b4b4" stroke-width=".9" fill="none"/></g><g transform="translate(170,5)" fill="#fff" stroke="#606060" stroke-width="1"><path d="M8 0.8 L15 4.5 V11.5 L8 15.2 L1 11.5 V4.5Z"/><path d="M1 4.5 L8 8 L15 4.5 M8 8 V15.2" stroke="#f26b12" fill="none"/><path d="M8 0.8 V8 M1 11.5 L8 8 L15 11.5" stroke="#c8c8c8" fill="none" stroke-width=".8"/></g><rect x="191" y="3" width="1" height="20" fill="#b8bcc4"/><g transform="translate(197,5)"><path d="M2 1.5 H14 M2 14.5 H14 M1.5 2 V14 M14.5 2 V14" stroke="#404040" stroke-width="1.2" stroke-dasharray="3 1.5" fill="none"/><rect x="0.0" y="0.0" width="3" height="3" fill="#fff" stroke="#404040" stroke-width=".9"/><rect x="13.0" y="0.0" width="3" height="3" fill="#fff" stroke="#404040" stroke-width=".9"/><rect x="0.0" y="13.0" width="3" height="3" fill="#fff" stroke="#404040" stroke-width=".9"/><rect x="13.0" y="13.0" width="3" height="3" fill="#fff" stroke="#404040" stroke-width=".9"/><path d="M4 8 H7 M9 8 H12 M8 4 V7 M8 9 V12" stroke="#404040" stroke-width="1.2"/><rect x="7.3" y="7.3" width="1.4" height="1.4" fill="#f26b12"/></g><g transform="translate(219,5)"><path d="M2 1.5 H14 M2 14.5 H14 M1.5 2 V14 M14.5 2 V14" stroke="#404040" stroke-width="1.2" stroke-dasharray="3 1.5" fill="none"/><rect x="0.0" y="0.0" width="3" height="3" fill="#fff" stroke="#404040" stroke-width=".9"/><rect x="13.0" y="0.0" width="3" height="3" fill="#fff" stroke="#404040" stroke-width=".9"/><rect x="0.0" y="13.0" width="3" height="3" fill="#fff" stroke="#404040" stroke-width=".9"/><rect x="13.0" y="13.0" width="3" height="3" fill="#fff" stroke="#404040" stroke-width=".9"/><rect x="3.5" y="4.5" width="9" height="7" fill="#fff" stroke="#f26b12" stroke-width="1.1"/><path d="M4.5 10.5 L7 7.5 L8.8 9.3 L10 8.3 L11.5 10.5Z" fill="#f26b12"/></g><rect x="240" y="3" width="1" height="20" fill="#b8bcc4"/><rect x="244" y="3" width="20" height="20" fill="#b4d6f6"/><g transform="translate(246,4)"><path d="M8 1.2 C4.6 1.2 3 3.6 3 6 C3 8.4 5.2 9.6 5.6 12 H10.4 C10.8 9.6 13 8.4 13 6 C13 3.6 11.4 1.2 8 1.2Z" fill="#f5d21e" stroke="#404040" stroke-width="1.2"/><path d="M5.8 13.2 H10.2 M6.3 15 H9.7 M7 16.6 H9" stroke="#404040" stroke-width="1.3"/><path d="M6.6 6.5 L8 8.5 L9.4 6.5 M8 8.5 V11.5" stroke="#6a5a10" stroke-width=".9" fill="none"/></g><g transform="translate(267,4)"><path d="M1 9 L9 6.5 L11 16 L2 17Z" fill="#f2d21e"/><path d="M9 16 L12.5 6" stroke="#404040" stroke-width="1.6"/><circle cx="13.2" cy="4.2" r="3.4" fill="#e8e8e8" stroke="#404040" stroke-width="1.3"/><circle cx="13.2" cy="4.2" r="1.3" fill="#404040"/></g><path d="M291 17.5 h6 M291.3 19.5 h5.4 l-2.7 3z" stroke="#606060" stroke-width="1" fill="#606060"/></svg></div>
<!-- bottom buttons -->
<div class="btn" style="left:943px;top:586px;width:70px;height:24px;line-height:24px">Import</div>
<div class="btn" style="left:1033px;top:586px;width:70px;height:24px;line-height:24px">Delete</div>
<div class="btn" style="left:1123px;top:586px;width:70px;height:24px;line-height:24px">Reset</div>
<div class="btn" style="left:1213px;top:586px;width:70px;height:24px;line-height:24px">Save</div>

<!-- PROPERTIES PANEL -->
<div id="props" class="abs" style="left:1302px;top:71px;width:298px;height:546px;background:#f0f0f0;border:1px solid #a4a4a2"></div>
<div class="ph" style="left:1303px;top:72px;width:296px"></div>
<div class="t" style="left:1305.4px;top:74px;letter-spacing:-.12px">Properties</div>

<div class="abs" style="left:1303px;top:89px;width:296px;height:501px;background:#f0f0f0"></div><div class="abs" style="left:1303px;top:124px;width:296px;height:432px;background:#fff"></div><div class="abs" style="left:1303px;top:124px;width:15px;height:419px;background:#f0f0f0"></div><svg class="abs" style="left:1310px;top:100px" width="50" height="12" viewBox="0 0 50 12"><path d="M0 3 h4 M0 6.5 h4 M6 2 h6 M6 4.5 h6 M6 7 h6 M6 9.5 h6" stroke="#222" stroke-width="1.2"/><path d="M24.5 1.5 v6" stroke="#222" stroke-width="1.6"/><path d="M22 6.2 h5 l-2.5 3.3z" fill="#222"/><path d="M38 2 h9 M38 4.7 h9 M38 7.4 h9 M38 10 h9" stroke="#222" stroke-width="1.2"/></svg><div class="t" style="left:1366.4px;top:99.5px;letter-spacing:-0.627px">Search:</div><div class="abs" style="left:1409px;top:93px;width:187px;height:25px;background:#fff;border:1px solid #dadada"></div><div class="abs" style="left:1321px;top:124px;width:276px;height:16px;background:#e2e2e2"></div><div class="abs" style="left:1307px;top:127.5px;width:9px;height:9px;background:#fff;border:1px solid #767676"></div><div class="abs" style="left:1309px;top:131.5px;width:5px;height:1px;background:#222"></div><div class="t b" style="left:1321px;top:126.0px;letter-spacing:-0.537px">Fields</div><div class="abs" style="left:1321px;top:406.5px;width:276px;height:16px;background:#e2e2e2"></div><div class="abs" style="left:1307px;top:409.5px;width:9px;height:9px;background:#fff;border:1px solid #767676"></div><div class="abs" style="left:1309px;top:413.5px;width:5px;height:1px;background:#222"></div><div class="t b" style="left:1321px;top:408.0px;letter-spacing:-0.011px">Directional Data</div><div class="abs" style="left:1317px;top:158px;width:283px;height:1px;background:#ececec"></div><div class="t" style="left:1320.1px;top:144.0px;letter-spacing:-0.044px">Description</div><div class="t" style="left:1481px;width:115px;text-align:right;top:144.0px;color:#000;letter-spacing:-.3px">SurfaceRoad</div><div class="abs" style="left:1317px;top:175px;width:283px;height:1px;background:#ececec"></div><div class="t" style="left:1320.1px;top:161.0px;letter-spacing:-0.161px">Length</div><div class="t" style="left:1481px;width:115px;text-align:right;top:161.0px;color:#8a8a8a;letter-spacing:-.3px">268.42</div><div class="abs" style="left:1317px;top:192px;width:283px;height:1px;background:#ececec"></div><div class="t" style="left:1320.1px;top:178.0px;letter-spacing:-0.445px">Grade (%)</div><div class="t" style="left:1481px;width:115px;text-align:right;top:178.0px;color:#8a8a8a;letter-spacing:-.3px">18.65</div><div class="abs" style="left:1317px;top:209px;width:283px;height:1px;background:#ececec"></div><div class="t" style="left:1320.1px;top:195.0px;letter-spacing:0.205px">Width</div><div class="t" style="left:1481px;width:115px;text-align:right;top:195.0px;color:#000;letter-spacing:-.3px">20.00</div><div class="abs" style="left:1317px;top:226px;width:283px;height:1px;background:#ececec"></div><div class="t" style="left:1320.1px;top:212.0px;letter-spacing:0.022px">Height</div><div class="t" style="left:1481px;width:115px;text-align:right;top:212.0px;color:#000;letter-spacing:-.3px">20.00</div><div class="abs" style="left:1317px;top:243px;width:283px;height:1px;background:#ececec"></div><div class="t" style="left:1320.1px;top:229.0px;letter-spacing:-0.323px">Rolling Resistance</div><div class="t" style="left:1481px;width:115px;text-align:right;top:229.0px;color:#000;letter-spacing:-.3px">2.00</div><div class="abs" style="left:1317px;top:260px;width:283px;height:1px;background:#ececec"></div><div class="t" style="left:1320.1px;top:246.0px;letter-spacing:-0.054px">Traction Coefficient</div><div class="t" style="left:1481px;width:115px;text-align:right;top:246.0px;color:#000;letter-spacing:-.3px">0.36</div><div class="abs" style="left:1317px;top:277px;width:283px;height:1px;background:#ececec"></div><div class="t" style="left:1320.1px;top:263.0px;letter-spacing:-0.076px">Ground Structure</div><div class="t" style="left:1481px;width:115px;text-align:right;top:263.0px;color:#000;letter-spacing:-.3px">0.00</div><div class="abs" style="left:1317px;top:294px;width:283px;height:1px;background:#ececec"></div><div class="t" style="left:1320.1px;top:280.0px;letter-spacing:-0.166px">Creation Type</div><div class="abs" style="left:1481px;top:278px;width:119px;height:16px;background:#e4e4e4"></div><div class="t" style="left:1488px;top:280.0px;color:#808080;letter-spacing:-0.259px">Rationalised</div><div class="abs" style="left:1317px;top:317px;width:283px;height:1px;background:#ececec"></div><div class="t" style="left:1320.1px;top:300.0px;letter-spacing:-0.308px">Pit</div><div class="t" style="left:1491px;top:300.0px;letter-spacing:-0.884px">KSGMv2</div><div class="abs" style="left:1588px;top:296px;width:14px;height:20px;background:linear-gradient(#f6f6f6,#dedede);border:1px solid #8a8a8a;border-radius:2px"></div><svg class="abs" style="left:1594px;top:303.7px" width="7" height="4" viewBox="0 0 7 4"><path d="M0 0 h7 l-3.5 4z" fill="#222"/></svg><div class="abs" style="left:1317px;top:340px;width:283px;height:1px;background:#ececec"></div><div class="t" style="left:1320.1px;top:323.0px;letter-spacing:-0.401px">Pushback</div><div class="t" style="left:1491px;top:323.0px;letter-spacing:-0.608px">PBack1, PBack2,...</div><div class="abs" style="left:1588px;top:319px;width:14px;height:20px;background:linear-gradient(#f6f6f6,#dedede);border:1px solid #8a8a8a;border-radius:2px"></div><svg class="abs" style="left:1594px;top:326.7px" width="7" height="4" viewBox="0 0 7 4"><path d="M0 0 h7 l-3.5 4z" fill="#222"/></svg><div class="abs" style="left:1317px;top:363px;width:283px;height:1px;background:#ececec"></div><div class="t" style="left:1320.1px;top:346.0px;letter-spacing:0.063px">Dump</div><div class="t" style="left:1491px;top:346.0px;letter-spacing:-0.100px">None</div><div class="abs" style="left:1588px;top:342px;width:14px;height:20px;background:linear-gradient(#f6f6f6,#dedede);border:1px solid #8a8a8a;border-radius:2px"></div><svg class="abs" style="left:1594px;top:349.7px" width="7" height="4" viewBox="0 0 7 4"><path d="M0 0 h7 l-3.5 4z" fill="#222"/></svg><div class="abs" style="left:1317px;top:386px;width:283px;height:1px;background:#ececec"></div><div class="t" style="left:1320.1px;top:369.0px;letter-spacing:-0.473px">RoadType</div><div class="t" style="left:1491px;top:369.0px;letter-spacing:-0.561px">Surface</div><div class="abs" style="left:1588px;top:365px;width:14px;height:20px;background:linear-gradient(#f6f6f6,#dedede);border:1px solid #8a8a8a;border-radius:2px"></div><svg class="abs" style="left:1594px;top:372.7px" width="7" height="4" viewBox="0 0 7 4"><path d="M0 0 h7 l-3.5 4z" fill="#222"/></svg><div class="abs" style="left:1317px;top:404px;width:283px;height:1px;background:#ececec"></div><div class="t" style="left:1320.1px;top:389px;letter-spacing:-0.193px">RampNum</div><div class="t" style="left:1481px;width:115px;text-align:right;top:389px;color:#000;letter-spacing:-.3px">167.00</div><div class="abs" style="left:1317px;top:440px;width:283px;height:1px;background:#ececec"></div><div class="t" style="left:1320.1px;top:426.0px;letter-spacing:-0.147px">Maximum Speed Full</div><div class="t" style="left:1481px;width:115px;text-align:right;top:426.0px;color:#000;letter-spacing:-.3px">60.00</div><div class="abs" style="left:1317px;top:457px;width:283px;height:1px;background:#ececec"></div><div class="t" style="left:1320.1px;top:443.0px;letter-spacing:-0.163px">Maximum Final Speed Full</div><div class="t" style="left:1481px;width:115px;text-align:right;top:443.0px;color:#000;letter-spacing:-.3px">60.00</div><div class="abs" style="left:1317px;top:474px;width:283px;height:1px;background:#ececec"></div><div class="t" style="left:1320.1px;top:460.0px;letter-spacing:-0.111px">Maximum Speed Empty</div><div class="t" style="left:1481px;width:115px;text-align:right;top:460.0px;color:#000;letter-spacing:-.3px">60.00</div><div class="abs" style="left:1317px;top:491px;width:283px;height:1px;background:#ececec"></div><div class="t" style="left:1320.1px;top:477.0px;letter-spacing:-0.135px">Maximum Final Speed Empty</div><div class="t" style="left:1481px;width:115px;text-align:right;top:477.0px;color:#000;letter-spacing:-.3px">60.00</div><div class="abs" style="left:1317px;top:508px;width:283px;height:1px;background:#ececec"></div><div class="t" style="left:1320.1px;top:494.0px;letter-spacing:-0.181px">Full Only</div><div class="chk" style="left:1489px;top:493px"></div><div class="abs" style="left:1317px;top:525px;width:283px;height:1px;background:#ececec"></div><div class="t" style="left:1320.1px;top:511.0px;letter-spacing:-0.148px">Empty Only</div><div class="chk" style="left:1489px;top:510px"></div><div class="abs" style="left:1317px;top:542px;width:283px;height:1px;background:#ececec"></div><div class="t" style="left:1320.1px;top:528.0px;letter-spacing:-0.357px">Enabled</div><div class="chk" style="left:1489px;top:527px"><svg width="14" height="13" viewBox="0 0 14 13"><path d="M2.9 6.6 L6.4 10 L11.5 2.9" fill="none" stroke="#1c1c1c" stroke-width="2"/></svg></div><div class="abs" style="left:1480px;top:141px;width:1px;height:264px;background:#ececec"></div><div class="abs" style="left:1480px;top:423px;width:1px;height:120px;background:#ececec"></div><div class="abs" style="left:1598px;top:89px;width:2px;height:501px;background:linear-gradient(to right,#f2f2f2 50%,#a4a4a2 50%)"></div><div class="abs" style="left:1303px;top:590px;width:296px;height:26px;background:#a0a0a0"></div><div class="tab" style="left:1303px;top:592px;width:39px;height:22px;line-height:23px;letter-spacing:-.25px">Filters</div><div class="tab" style="left:1344px;top:592px;width:53px;height:22px;line-height:23px;letter-spacing:-.3px">Legends</div><div class="tab sel" style="left:1399px;top:592px;width:61px;height:23px;line-height:23px;letter-spacing:-.15px">Properties</div><svg class="abs" style="left:1548px;top:72.5px" width="52" height="16" viewBox="0 0 52 16"><path d="M1.5 5.5 h10 l-5 5z" fill="#4a4a4a"/><path d="M21 3.5 h5 M21.5 3.5 v6 M19.5 9.5 h8 M23.5 9.5 v5" stroke="#4a4a4a" stroke-width="1.1" fill="none"/><path d="M25.3 3 v6.5" stroke="#4a4a4a" stroke-width="1.9" fill="none"/><path d="M37 3 L47 13 M47 3 L37 13" stroke="#4a4a4a" stroke-width="1.5" fill="none"/></svg>
<!-- DETAILS PANEL -->
<div id="details" class="abs" style="left:0;top:621px;width:1600px;height:136px;background:#f0f0f0;border:1px solid #a4a4a2"></div>
<div class="ph" style="left:1px;top:622px;width:1598px"></div>
<div class="t" style="left:3px;top:624px;letter-spacing:-.2px">Details</div>
<div class="abs" style="left:0;top:729px;width:1600px;height:28px;background:#a0a0a0"></div>

<svg class="abs" style="left:1548px;top:622.5px" width="52" height="16" viewBox="0 0 52 16"><path d="M1.5 5.5 h10 l-5 5z" fill="#4a4a4a"/><path d="M21 3.5 h5 M21.5 3.5 v6 M19.5 9.5 h8 M23.5 9.5 v5" stroke="#4a4a4a" stroke-width="1.1" fill="none"/><path d="M25.3 3 v6.5" stroke="#4a4a4a" stroke-width="1.9" fill="none"/><path d="M37 3 L47 13 M47 3 L37 13" stroke="#4a4a4a" stroke-width="1.5" fill="none"/></svg><div class="tab" style="left:2px;top:732px;width:91px;height:22px;line-height:23px;letter-spacing:-.2px">Properties Table</div><div class="tab" style="left:95px;top:732px;width:45px;height:22px;line-height:23px;letter-spacing:-.45px">Results</div><div class="tab sel" style="left:142px;top:732px;width:44px;height:23px;line-height:23px;letter-spacing:-.2px">Details</div>
</body>
</html>
